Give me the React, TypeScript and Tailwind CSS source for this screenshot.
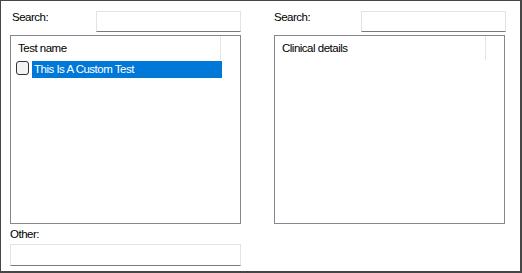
import React from "react";

function TextBox({ w, h }: { w: string; h: string }) {
  return (
    <div
      className={`${w} ${h} bg-white border border-[#e3e3e3] border-b-[#7a7a7a]`}
    />
  );
}

export default function App() {
  return (
    <div
      className="w-[522px] h-[273px] bg-white border-l border-t border-r-2 border-b-2 border-[#464646] text-black text-[11.5px] tracking-[-0.5px]"
      style={{ fontFamily: '"Liberation Sans", Arial, sans-serif' }}
    >
      <div className="flex pl-[9px] pt-[9px] gap-[33px]">
        {/* Left column */}
        <div className="w-[231px] flex flex-col">
          <div className="flex justify-between items-start h-[22px]">
            <span className="leading-[14px] pl-[2px]">Search:</span>
            <div className="mt-[1px]">
              <TextBox w="w-[145px]" h="h-[21px]" />
            </div>
          </div>
          <div className="mt-[3px] h-[189px] border border-[#828790] flex flex-col">
            <div className="flex h-[24px]">
              <div className="w-[210px] flex items-center pl-[7px] border-r border-[#e5e5e5] pt-[1px]">
                Test name
              </div>
            </div>
            <div className="flex items-start mt-[1px] h-[17px]">
              <div className="ml-[5px] w-[13px] h-[14px] rounded-[3px] border border-[#333] bg-[#f3f3f3]" />
              <div className="ml-[3px] w-[190px] h-[17px] bg-[#0078d7] text-white flex items-center pl-[2px]">
                This Is A Custom Test
              </div>
            </div>
          </div>
          <div className="h-[20px] flex items-end pb-[3px] leading-[14px]">
            Other:
          </div>
          <TextBox w="w-[231px]" h="h-[22px]" />
        </div>
        {/* Right column */}
        <div className="w-[232px] flex flex-col">
          <div className="flex justify-between items-start h-[22px]">
            <span className="leading-[14px]">Search:</span>
            <div className="mt-[1px]">
              <TextBox w="w-[145px]" h="h-[21px]" />
            </div>
          </div>
          <div className="mt-[3px] w-[231px] h-[189px] border border-[#828790] flex flex-col">
            <div className="flex h-[24px]">
              <div className="w-[211px] flex items-center pl-[7px] border-r border-[#e5e5e5] pt-[1px]">
                Clinical details
              </div>
            </div>
          </div>
        </div>
      </div>
    </div>
  );
}
